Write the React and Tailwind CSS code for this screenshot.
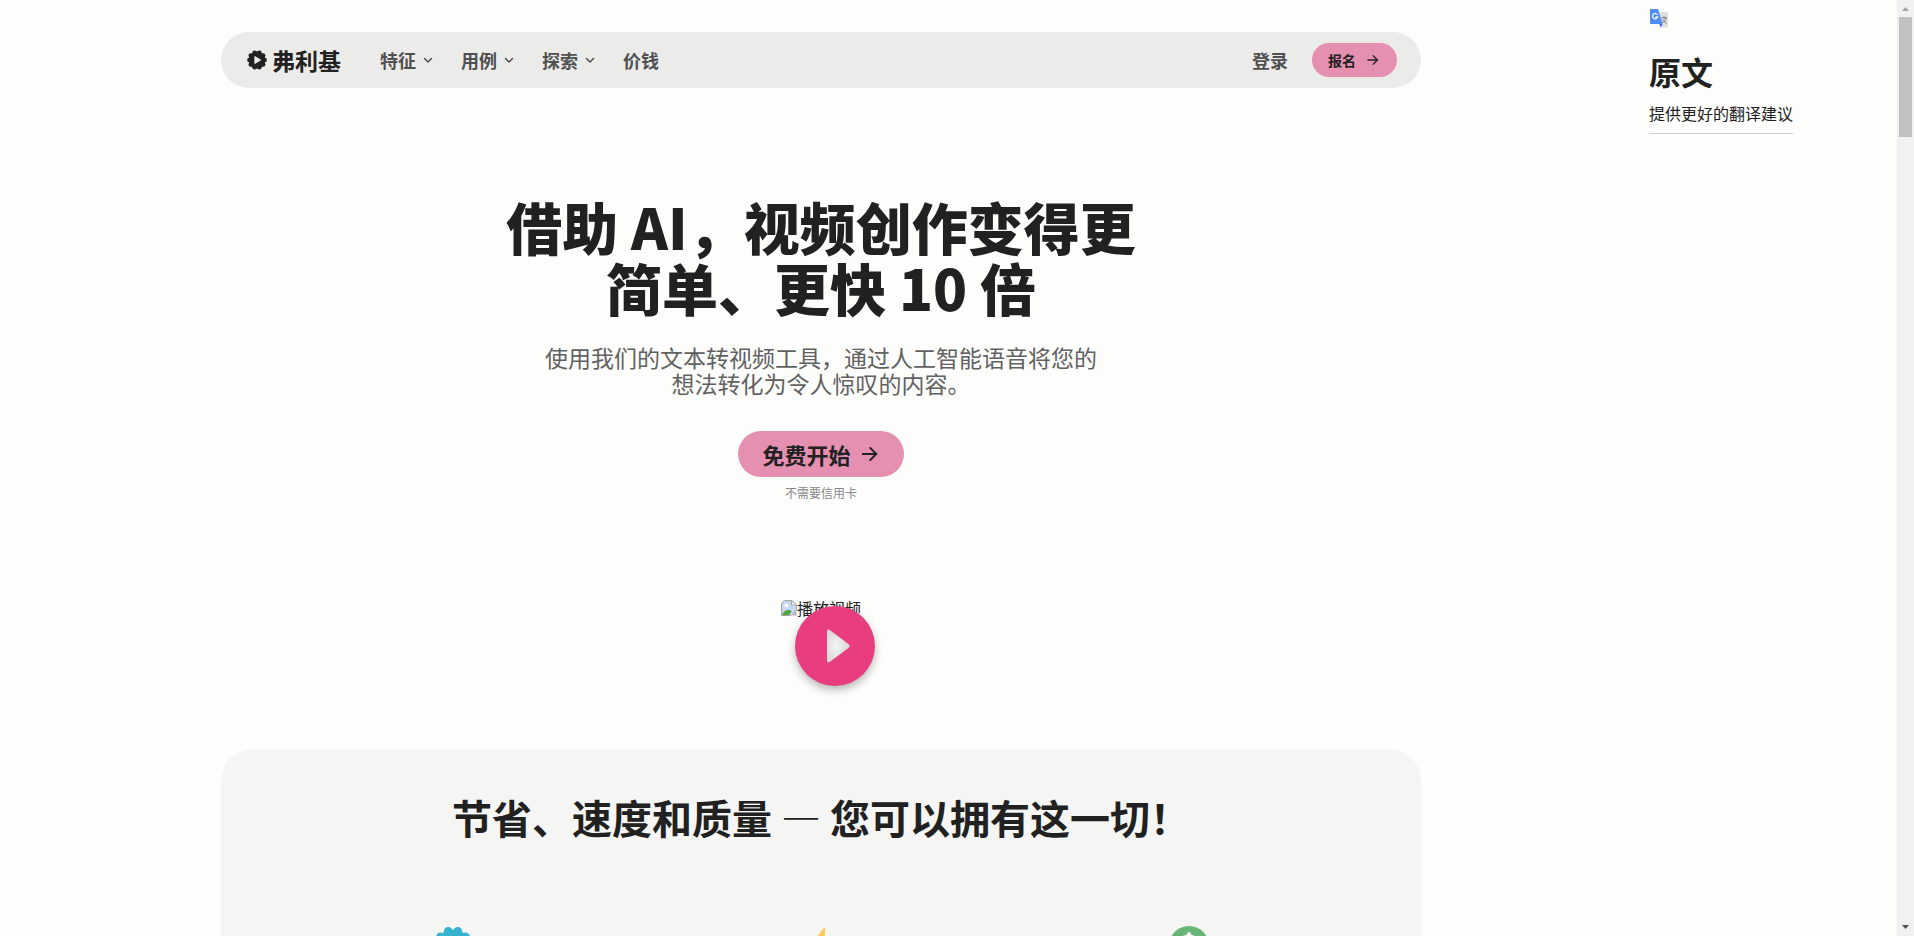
import React from "react";

const navItems = [
  { label: "特征", menu: true },
  { label: "用例", menu: true },
  { label: "探索", menu: true },
  { label: "价钱", menu: false },
];

function LogoMark() {
  const teeth = Array.from({ length: 10 }, (_, i) => {
    const a = (i * Math.PI * 2) / 10;
    return [10 + 7.6 * Math.cos(a), 10 + 7.6 * Math.sin(a)];
  });
  return (
    <svg className="size-5" viewBox="0 0 20 20" aria-hidden="true">
      <g fill="#212121">
        <circle cx="10" cy="10" r="8.4" />
        {teeth.map(([x, y], i) => (
          <circle key={i} cx={x} cy={y} r="2.3" />
        ))}
      </g>
      <path d="M7.8 6.4 13.8 10l-6 3.6z" fill="#ebebea" stroke="#ebebea" strokeWidth="0.8" strokeLinejoin="round" />
    </svg>
  );
}

function Chevron() {
  return (
    <svg className="size-4" viewBox="0 0 16 16" fill="none" stroke="#454545" strokeWidth="1.4" strokeLinecap="round" strokeLinejoin="round" aria-hidden="true">
      <path d="m4.5 6.5 3.5 3.5 3.5-3.5" />
    </svg>
  );
}

function Arrow({ className }) {
  return (
    <svg className={className} viewBox="0 0 20 20" fill="none" stroke="#212121" strokeWidth="2" aria-hidden="true">
      <path d="M2 10h14M9.700 3.400l6.600 6.600-6.600 6.600" />
    </svg>
  );
}

function TranslateIcon() {
  return (
    <svg className="size-5" viewBox="0 0 20 20" aria-hidden="true">
      <path d="M7 3h11a1 1 0 0 1 1 1v13.500a1 1 0 0 1-1 1h-6z" fill="#dedede" />
      <path d="M10.500 15h3l-2 3.500z" fill="#3367d6" />
      <path d="M1 0h8l4.500 15H2a1 1 0 0 1-1-1z" fill="#4f8df5" />
      <path d="M8.400 5.800A2.600 2.600 0 1 0 8.600 8H6.300" fill="none" stroke="#e4edfd" strokeWidth="1.300" />
      <path d="M12.300 8.800h5.500M15 7.300v1.500M17 8.800c-.6 2.500-2 4.200-4 5.200M13.600 10.500c.8 1.700 2.300 3 4 3.700" fill="none" stroke="#737b80" strokeWidth="1" />
    </svg>
  );
}

function BrokenImage() {
  return (
    <svg className="size-4 shrink-0" viewBox="0 0 16 16" aria-hidden="true">
      <path d="M5 .5h6L15.500 5v5L10 15.500H.5V5A4.500 4.500 0 0 1 5 .5z" fill="#c6d6f3" stroke="#a5a5a5" />
      <path d="M10.500.5V5h5z" fill="#fff" stroke="#a5a5a5" />
      <circle cx="5.500" cy="5.500" r="2" fill="#fff" />
      <path d="M1 15c1-3.500 4-5 6.500-5 1.500 0 2.500.5 3.200 1.300L8 15z" fill="#52a63c" />
      <path d="M15.500 9v6.500H11z" fill="#b5b5b5" />
    </svg>
  );
}

function Badge() {
  const lobes = Array.from({ length: 10 }, (_, i) => {
    const a = (i * Math.PI * 2) / 10;
    return [20 + 15.5 * Math.cos(a), 20 + 15.5 * Math.sin(a)];
  });
  return (
    <svg className="size-10" viewBox="0 0 40 40" fill="#35b3cf" aria-hidden="true">
      <circle cx="20" cy="20" r="16.5" />
      {lobes.map(([x, y], i) => (
        <circle key={i} cx={x} cy={y} r="4.300" />
      ))}
    </svg>
  );
}

function Bolt() {
  return (
    <svg className="size-10" viewBox="0 0 40 40" aria-hidden="true">
      <path d="M22 2.800c.8-1.200 2.300-.8 2.300.8L23.200 16H32c1.200 0 1.600 1 .8 2L17 38c-.8 1-2 .5-1.700-.8L17 23H9c-1.200 0-1.600-1-.8-2z" fill="#ffcb5c" />
    </svg>
  );
}

function Quality() {
  return (
    <svg className="size-10" viewBox="0 0 40 40" aria-hidden="true">
      <circle cx="20" cy="20" r="20" fill="#69b578" />
      <path d="M20 6c1.200 0 1.600.8 1.900 1.800.3.900 1 1.300 2 1.500C29 10.500 31 14 31 18s-5 13-11 16C14 31 9 22 9 18s2-7.500 7.100-8.700c1-.2 1.700-.6 2-1.500C18.400 6.800 18.800 6 20 6z" fill="#f5f5f4" />
    </svg>
  );
}

function Header() {
  return (
    <header className="flex h-14 items-center rounded-full bg-[#ebebea] pr-6 pl-[26px] text-[18px] font-bold text-[#505050]">
      <a href="#home" className="flex items-center gap-[5px] text-[23px] leading-7 text-[#212121]">
        <LogoMark />
        弗利基
      </a>
      <nav className="ml-[39px] flex items-center gap-[25px]" aria-label="主导航">
        {navItems.map((item) =>
          item.menu ? (
            <button key={item.label} type="button" className="flex items-center gap-1">
              {item.label}
              <Chevron />
            </button>
          ) : (
            <a key={item.label} href="#pricing">{item.label}</a>
          )
        )}
      </nav>
      <div className="ml-auto flex items-center gap-6">
        <a href="#login">登录</a>
        <a href="#signup" className="flex h-[34px] items-center gap-[9px] rounded-full bg-[#e58fb1] px-4 text-[14px] text-[#212121]">
          报名
          <Arrow className="size-4 p-px" />
        </a>
      </div>
    </header>
  );
}

function Hero() {
  return (
    <section className="flex flex-col items-center pt-[107px] text-center">
      <h1 className="text-[56px] leading-[61px] font-black text-[#212121]">
        借助 AI，视频创作变得更
        <br />
        简单、更快 10 倍
      </h1>
      <p className="mt-[27px] text-[23px] leading-[26px] text-[#616161]">
        使用我们的文本转视频工具，通过人工智能语音将您的
        <br />
        想法转化为令人惊叹的内容。
      </p>
      <a href="#start" className="mt-[35px] flex h-[46px] items-center gap-[9px] rounded-full bg-[#e58fb1] px-6 text-[22px] leading-7 font-bold text-[#212121]">
        免费开始
        <Arrow className="size-5" />
      </a>
      <p className="mt-[7px] text-[12px] leading-[18px] text-[#888888]">不需要信用卡</p>
      <div className="relative mt-[94px] flex h-6 items-center text-[16px]">
        <BrokenImage />
        播放视频
        <button
          type="button"
          aria-label="播放"
          className="absolute top-[10px] left-[14px] flex size-20 items-center justify-center rounded-full bg-[#e83e80] shadow-[0_4px_8px_rgba(0,0,0,0.28)]"
        >
          <svg className="size-10" viewBox="0 0 40 40" aria-hidden="true">
            <defs>
              <radialGradient id="play-shade" cx="0.4" cy="0.5" r="0.6">
                <stop offset="0" stopColor="#f5f5f5" />
                <stop offset="1" stopColor="#d5d5d5" />
              </radialGradient>
            </defs>
            <path d="M12 5.500c0-1.600 1.400-2.400 2.700-1.500l19 14.300c1.200.9 1.200 2.500 0 3.400l-19 14.300c-1.300.9-2.700.1-2.700-1.500z" fill="url(#play-shade)" />
          </svg>
        </button>
      </div>
    </section>
  );
}

function Benefits() {
  return (
    <section className="mt-[129px] rounded-[32px] bg-[#f5f5f4] px-12 pt-10 pb-16">
      <h2 className="text-center text-[40px] leading-[56px] font-bold text-[#212121]">
        节省、速度和质量 — 您可以拥有这一切！
      </h2>
      <div className="mt-[81px] grid grid-cols-3 justify-items-center">
        <Badge />
        <Bolt />
        <Quality />
      </div>
    </section>
  );
}

function Original() {
  return (
    <aside className="w-[255px] shrink-0 pt-[9px] pl-[7px] text-[#212121]">
      <TranslateIcon />
      <h2 className="mt-[18px] text-[32px] leading-[48px] font-bold">原文</h2>
      <a href="#suggest" className="mt-[6px] inline-block border-b border-[#cccccc] pb-2 text-[16px] leading-6">
        提供更好的翻译建议
      </a>
    </aside>
  );
}

function ScrollRail() {
  return (
    <div className="flex w-[17px] shrink-0 flex-col items-center bg-[#f1f1f1]" aria-hidden="true">
      <svg className="h-[17px] w-full shrink-0" viewBox="0 0 17 17">
        <path d="M5 11h7L8.500 7z" fill="#a3a3a3" />
      </svg>
      <div className="h-[120px] w-[13px] bg-[#c1c1c1]" />
      <svg className="mt-auto h-[17px] w-full shrink-0" viewBox="0 0 17 17">
        <path d="M5 6h7l-3.500 4z" fill="#505050" />
      </svg>
    </div>
  );
}

export default function App() {
  return (
    <div lang="zh-CN" className="flex h-screen overflow-hidden bg-[#fdfdfc] font-['Noto_Sans_CJK_SC',sans-serif] text-[#212121]">
      <main className="min-w-0 flex-1 pt-8">
        <div className="mx-auto max-w-[1200px]">
          <Header />
          <Hero />
          <Benefits />
        </div>
      </main>
      <Original />
      <ScrollRail />
    </div>
  );
}
